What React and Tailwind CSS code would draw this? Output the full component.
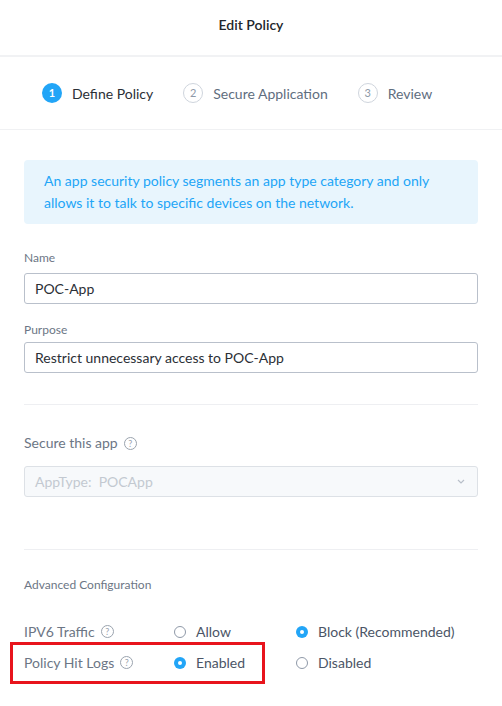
import React from "react";

const font = { fontFamily: "Lato, 'Open Sans', sans-serif" };

function Help() {
  return (
    <span className="inline-flex items-center justify-center w-[13px] h-[13px] rounded-full border border-[#9aa3ae] text-[9px] leading-none text-[#9aa3ae] ml-[6px]">
      ?
    </span>
  );
}

function Radio({ on, label }) {
  return (
    <div className="flex items-center gap-[10px]">
      {on ? (
        <span className="w-[12px] h-[12px] rounded-full bg-[#22a5f7] flex items-center justify-center">
          <span className="w-[4px] h-[4px] rounded-full bg-white" />
        </span>
      ) : (
        <span className="w-[12px] h-[12px] rounded-full border border-[#8f99a8] bg-white" />
      )}
      <span className="text-[14px] text-[#4b5566]">{label}</span>
    </div>
  );
}

function Step({ n, label, active }) {
  return (
    <div className="flex items-center gap-[10px]">
      {active ? (
        <span className="w-[20px] h-[20px] rounded-full bg-[#22a5f7] text-white text-[11px] font-bold flex items-center justify-center">
          {n}
        </span>
      ) : (
        <span className="w-[20px] h-[20px] rounded-full border border-[#cfd5dd] text-[#8e99a8] text-[11px] flex items-center justify-center">
          {n}
        </span>
      )}
      <span className={"text-[14px] " + (active ? "text-[#2b2f36]" : "text-[#5f6e80]")}>{label}</span>
    </div>
  );
}

export default function App() {
  return (
    <div className="w-[502px] h-[706px] bg-white overflow-hidden" style={font}>
      <div className="h-[57px] pb-[6px] flex items-center justify-center border-b-2 border-[#f1f2f4] text-[14px] text-[#22262c] font-semibold">
        Edit Policy
      </div>
      <div className="h-[73px] flex items-center pl-[42px] gap-[30px] border-b border-[#f0f1f3]">
        <Step n="1" label="Define Policy" active />
        <Step n="2" label="Secure Application" />
        <Step n="3" label="Review" />
      </div>
      <div className="px-[24px] pt-[30px]">
        <div className="bg-[#e8f5fd] rounded-[4px] px-[20px] py-[10px] text-[14px] leading-[22px] text-[#22a5f7]">
          An app security policy segments an app type category and only allows it to talk to specific devices on the network.
        </div>
        <div className="mt-[27px] text-[12px] leading-[14px] text-[#6c7685]">Name</div>
        <div className="mt-[8px] h-[31px] border border-[#b9c0cb] rounded-[3px] flex items-center px-[10px] text-[14px] text-[#2b2f36]">
          POC-App
        </div>
        <div className="mt-[19px] text-[12px] leading-[14px] text-[#6c7685]">Purpose</div>
        <div className="mt-[5px] h-[31px] border border-[#b9c0cb] rounded-[3px] flex items-center px-[10px] text-[14px] text-[#2b2f36]">
          Restrict unnecessary access to POC-App
        </div>
        <div className="mt-[31px] border-t border-[#eeeff2]" />
        <div className="mt-[29px] flex items-center text-[14px] leading-[18px] text-[#6c7685]">
          Secure this app <Help />
        </div>
        <div className="mt-[14px] h-[31px] border border-[#dde1e6] bg-[#f7f9fb] rounded-[3px] flex items-center justify-between px-[10px] text-[14px] text-[#c3c9d1]">
          <span>AppType:&nbsp; POCApp</span>
          <svg width="8" height="5" viewBox="0 0 8 5" className="mr-[2px]">
            <path d="M1 1 L4 4 L7 1" stroke="#b8bfc9" strokeWidth="1.2" fill="none" />
          </svg>
        </div>
        <div className="mt-[52px] border-t border-[#eeeff2]" />
        <div className="mt-[28px] text-[12px] leading-[14px] text-[#6c7685]">Advanced Configuration</div>
        <div className="mt-[24px] grid grid-cols-[150px_122px_1fr] items-center h-[31px]">
          <div className="flex items-center text-[14px] text-[#6c7685]">
            IPV6 Traffic <Help />
          </div>
          <Radio label="Allow" />
          <Radio on label="Block (Recommended)" />
        </div>
        <div className="relative grid grid-cols-[150px_122px_1fr] items-center h-[31px]">
          <div className="flex items-center text-[14px] text-[#6c7685]">
            Policy Hit Logs <Help />
          </div>
          <Radio on label="Enabled" />
          <Radio label="Disabled" />
          <div className="absolute left-[-14px] top-[-5px] w-[255px] h-[42px] border-[3px] border-[#e8141c]" />
        </div>
      </div>
    </div>
  );
}
